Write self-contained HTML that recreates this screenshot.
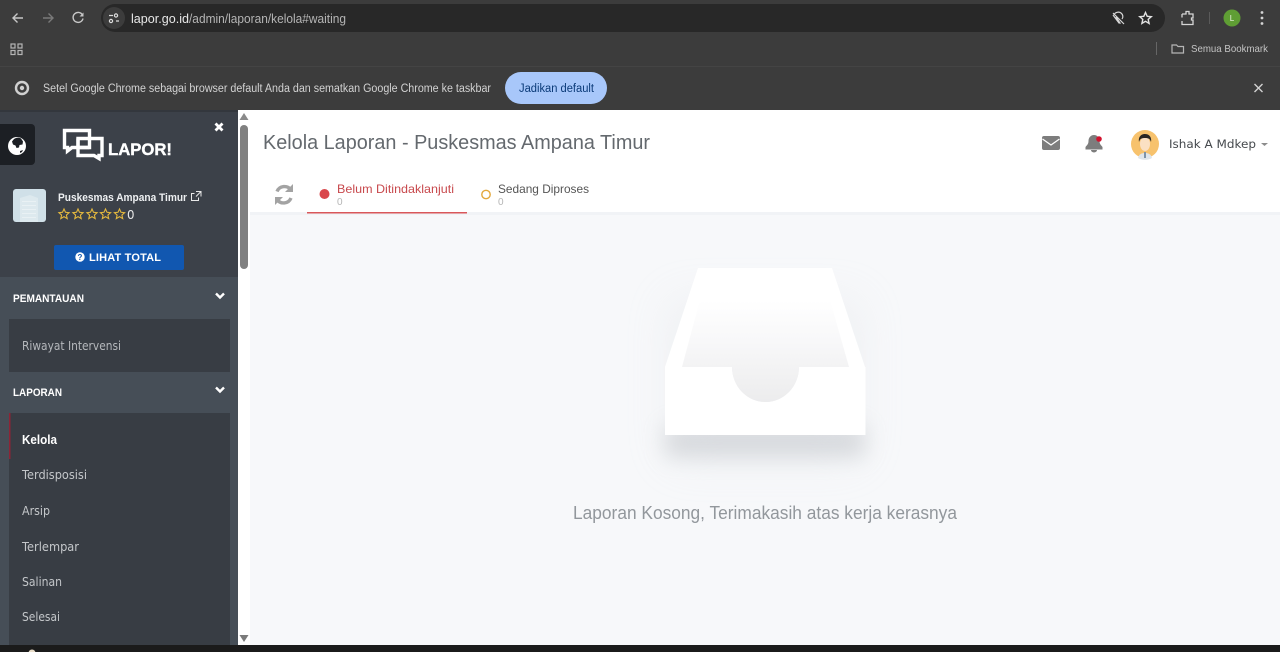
<!DOCTYPE html>
<html lang="id"><head><meta charset="utf-8"><title>Kelola Laporan</title>
<style>
html,body{margin:0;padding:0;width:1280px;height:652px;overflow:hidden;background:#f7f8fa}
svg{display:block;position:absolute;left:0;top:0;filter:blur(.3px)}
.c{font-family:"Liberation Sans",sans-serif}
.o{font-family:"DejaVu Sans",sans-serif}
</style></head><body>
<svg width="1280" height="652" viewBox="0 0 1280 652" xmlns="http://www.w3.org/2000/svg">
<defs>
<linearGradient id="inner2" gradientUnits="userSpaceOnUse" x1="0" y1="300" x2="0" y2="402"><stop offset="0" stop-color="#fff"/><stop offset=".4" stop-color="#f8f8f9"/><stop offset="1" stop-color="#ececed"/></linearGradient>
<filter id="blur" x="-30%" y="-100%" width="160%" height="300%"><feGaussianBlur stdDeviation="11"/></filter>
<filter id="blur2" x="-30%" y="-30%" width="160%" height="160%"><feGaussianBlur stdDeviation="22"/></filter>
</defs>

<!-- Chrome toolbar -->
<rect width="1280" height="110" fill="#3c3c3c"/>
<rect y="66" width="1280" height="1" fill="#444"/>
<rect x="101" y="4" width="1064" height="28" rx="14" fill="#282828"/>
<circle cx="114" cy="18" r="11" fill="#3c3c3c"/>
<g fill="none" stroke="#c7c7c7" stroke-width="1.400">
<path d="M23 18H13M17.500 13.500L13 18l4.500 4.500"/>
<path d="M43 18H53M48.500 13.500L53 18l-4.500 4.500" stroke="#7a7a7a"/>
<path d="M82.500 15a5 5 0 1 0 .5 3.500"/>
</g>
<path d="M83.500 12.500v4h-4z" fill="#c7c7c7"/>
<g fill="none" stroke="#ddd" stroke-width="1.200"><path d="M109 15.500h4M116 21h3"/><circle cx="116" cy="15.500" r="1.600"/><circle cx="111" cy="21" r="1.600"/></g>
<text class="c" x="131" y="23" font-size="13" fill="#e8e8e8" textLength="58" lengthAdjust="spacingAndGlyphs">lapor.go.id</text>
<text class="c" x="189" y="23" font-size="13" fill="#b5b5b5" textLength="157" lengthAdjust="spacingAndGlyphs">/admin/laporan/kelola#waiting</text>
<g fill="none" stroke="#d8d8d8" stroke-width="1.200"><path d="M1114 15c1-3 5-3.500 7-2 2 1.500 2.500 4 1 6M1116 17l4 6-1 0-6-8M1113 13l11 11"/></g>
<path d="M1145.500 12.500l1.700 3.800 4.100.4-3.100 2.700.9 4-3.600-2.100-3.600 2.100.9-4-3.100-2.700 4.100-.4z" fill="none" stroke="#e2e2e2" stroke-width="1.400"/>
<path d="M1182 14h4v-2.500h3V14h4v4h-1.500v2H1193v4.500h-4M1182 14v3.500M1182 21v3.500h7" fill="none" stroke="#d5d5d5" stroke-width="1.300"/>
<rect x="1209" y="12" width="1" height="12" fill="#5a5a5a"/>
<circle cx="1232" cy="18" r="8.500" fill="#5f9e34"/>
<text class="c" x="1232" y="21" font-size="8" fill="#e8f3df" text-anchor="middle">L</text>
<g fill="#d5d5d5"><circle cx="1262" cy="12.500" r="1.400"/><circle cx="1262" cy="18" r="1.400"/><circle cx="1262" cy="23.500" r="1.400"/></g>

<!-- Bookmarks bar -->
<g fill="none" stroke="#b5b5b5" stroke-width="1.200">
<rect x="11" y="44" width="4" height="4"/><rect x="18" y="44" width="4" height="4"/><rect x="11" y="50.500" width="4" height="4"/><rect x="18" y="50.500" width="4" height="4"/>
<path d="M1172 45h4.500l1.500 1.500h5.500v6.500h-11.500z"/>
</g>
<rect x="1156" y="42" width="1" height="13" fill="#666"/>
<text class="c" x="1191" y="52" font-size="10.500" fill="#c4c4c4" textLength="77" lengthAdjust="spacingAndGlyphs">Semua Bookmark</text>

<!-- Infobar -->
<circle cx="22" cy="88" r="6" fill="none" stroke="#d0d0d0" stroke-width="2.400"/>
<circle cx="22" cy="88" r="2.200" fill="#d0d0d0"/>
<text class="c" x="43" y="92" font-size="11.500" fill="#d2d2d2" textLength="448" lengthAdjust="spacingAndGlyphs">Setel Google Chrome sebagai browser default Anda dan sematkan Google Chrome ke taskbar</text>
<rect x="505" y="72" width="102" height="32" rx="16" fill="#a8c7fa"/>
<text class="c" x="519" y="92" font-size="11.500" fill="#0a3a78" textLength="75" lengthAdjust="spacingAndGlyphs">Jadikan default</text>
<path d="M1254.500 84l8 8M1262.500 84l-8 8" stroke="#d2d2d2" stroke-width="1.400"/>

<!-- Main -->
<rect x="0" y="110" width="1280" height="535" fill="#f7f8fa"/>
<rect x="238" y="110" width="1042" height="102" fill="#fff"/>
<rect x="250" y="212" width="1030" height="3" fill="#eceef1" opacity=".5"/>
<rect x="238" y="212" width="12" height="433" fill="#fff"/>

<!-- Sidebar -->
<rect x="0" y="110" width="238" height="167" fill="#3c4149"/>
<rect x="0" y="110" width="238" height="2" fill="#33373d"/>
<rect x="0" y="277" width="238" height="368" fill="#464e57"/>
<rect x="9" y="319" width="221" height="53" fill="#383d44"/>
<rect x="9" y="413" width="221" height="232" fill="#383d44"/>
<rect x="9" y="413" width="1.500" height="46" fill="#8e2436"/>

<!-- Scrollbar -->
<rect x="240" y="125" width="8" height="144" rx="4" fill="#808080"/>
<path d="M244 113l4.500 7h-9z" fill="#8a8a8a"/>
<path d="M239.500 635h9l-4.500 7z" fill="#7a7a7a"/>

<!-- Globe tab -->
<path d="M0 124h31a4 4 0 0 1 4 4v33a4 4 0 0 1-4 4H0z" fill="#1c1f24"/>
<circle cx="17" cy="146" r="9" fill="#fff"/>
<path d="M14 139c2-1.500 5-2 7-.5l2 3-.5 3-3 .5-.5 2.500-2.500.5-1-2.500-2.500-1-1-3z" fill="#1c1f24"/>
<path d="M20 151l3-1-1 2-2 1z" fill="#1c1f24"/>

<!-- Logo -->
<g fill="none" stroke="#fff" stroke-width="3.400">
<path d="M64.500 130.500h25v17H72l-4.500 3.500v-3.500h-3z"/>
<path d="M78 138.500h24v17h-3l0 3-5-3H78z"/>
<path d="M78 138.500v9h11.500"/>
</g>
<text class="c" x="108" y="155" font-size="17" font-weight="700" fill="#fff" stroke="#fff" stroke-width=".4" textLength="64" lengthAdjust="spacingAndGlyphs">LAPOR!</text>
<path d="M215.500 123.500l7 7M222.500 123.500l-7 7" stroke="#fff" stroke-width="2.800"/>

<!-- Profile -->
<rect x="13" y="189" width="33" height="33" rx="3" fill="#d0e0e8"/>
<path d="M20 198l10-3 8 3v24H20z" fill="#dde9ee"/>
<g fill="#e9f1f4"><rect x="22" y="201" width="14" height="1"/><rect x="22" y="205" width="14" height="1"/><rect x="22" y="209" width="14" height="1"/><rect x="22" y="213" width="14" height="1"/><rect x="22" y="217" width="14" height="1"/></g>
<text class="c" x="58" y="201" font-size="11" font-weight="700" fill="#eef0f2" textLength="129" lengthAdjust="spacingAndGlyphs">Puskesmas Ampana Timur</text>
<path d="M198.500 197.500v3h-7v-7h3M196 191.500h5v5M201 191.500l-5 5" fill="none" stroke="#e8e8e8" stroke-width="1"/>
<g fill="none" stroke="#e4b83e" stroke-width="1.100">
<path id="st" d="M64 209l1.500 3.300 3.600.4-2.700 2.400.8 3.500-3.200-1.900-3.200 1.900.8-3.500-2.700-2.400 3.600-.4z"/>
<use href="#st" x="14"/><use href="#st" x="28"/><use href="#st" x="41.500"/><use href="#st" x="55.500"/>
</g>
<text class="o" x="127" y="219" font-size="12" fill="#e8e8e8" textLength="7.500" lengthAdjust="spacingAndGlyphs">0</text>

<rect x="54" y="245" width="130" height="25" rx="2" fill="#1157b0"/>
<circle cx="80" cy="257" r="4.700" fill="#fff"/>
<text class="c" x="80" y="260" font-size="8" font-weight="700" fill="#1157b0" text-anchor="middle">?</text>
<text class="c" x="89" y="261" font-size="11" font-weight="700" fill="#fff" textLength="72">LIHAT TOTAL</text>

<text class="c" x="13" y="302" font-size="11" font-weight="700" fill="#fff" textLength="71" lengthAdjust="spacingAndGlyphs">PEMANTAUAN</text>
<path d="M216 293.500l4 4 4-4" fill="none" stroke="#fff" stroke-width="2.400"/>
<text class="o" x="22" y="350" font-size="12" fill="#b5b8bc" textLength="99" lengthAdjust="spacingAndGlyphs">Riwayat Intervensi</text>
<text class="c" x="13" y="396" font-size="11" font-weight="700" fill="#fff" textLength="49" lengthAdjust="spacingAndGlyphs">LAPORAN</text>
<path d="M216 387.500l4 4 4-4" fill="none" stroke="#fff" stroke-width="2.400"/>
<text class="c" x="22" y="444" font-size="13" font-weight="700" fill="#fff" textLength="35" lengthAdjust="spacingAndGlyphs">Kelola</text>
<g class="o" font-size="12" fill="#c4c7ca">
<text x="22" y="479" textLength="65" lengthAdjust="spacingAndGlyphs">Terdisposisi</text>
<text x="22" y="515" textLength="28" lengthAdjust="spacingAndGlyphs">Arsip</text>
<text x="22" y="551" textLength="57" lengthAdjust="spacingAndGlyphs">Terlempar</text>
<text x="22" y="586" textLength="40" lengthAdjust="spacingAndGlyphs">Salinan</text>
<text x="22" y="621" textLength="38" lengthAdjust="spacingAndGlyphs">Selesai</text>
</g>

<!-- Header -->
<text class="c" x="263" y="149" font-size="20" fill="#64696e" textLength="387" lengthAdjust="spacingAndGlyphs">Kelola Laporan - Puskesmas Ampana Timur</text>

<g fill="none" stroke="#a3a3a3" stroke-width="3.400">
<path d="M291 190a8 8 0 0 0-14 1.500"/>
<path d="M277 199.500a8 8 0 0 0 14-1.500"/>
</g>
<path d="M293 184v8h-8z" fill="#a3a3a3"/>
<path d="M275 205v-8h8z" fill="#a3a3a3"/>

<circle cx="324.500" cy="194" r="5" fill="#d9474b"/>
<text class="c" x="337" y="193" font-size="12" fill="#c8494d" textLength="117" lengthAdjust="spacingAndGlyphs">Belum Ditindaklanjuti</text>
<text class="c" x="337" y="205" font-size="10" fill="#b5b5b5">0</text>
<rect x="307" y="212" width="160" height="1.500" fill="#d9575a"/>
<circle cx="486" cy="194.500" r="4.200" fill="none" stroke="#e3a83c" stroke-width="1.400"/>
<text class="c" x="498" y="193" font-size="12" fill="#555" textLength="91" lengthAdjust="spacingAndGlyphs">Sedang Diproses</text>
<text class="c" x="498" y="205" font-size="10" fill="#b5b5b5">0</text>

<!-- Header right -->
<rect x="1042" y="136" width="18" height="14" rx="2" fill="#7d7d7d"/>
<path d="M1042.500 139l8.500 6 8.500-6" fill="none" stroke="#fff" stroke-width="1.300"/>
<path d="M1094 135c3.500 0 5.500 3 5.500 6 0 3.500 2 4.500 3 6v2.500h-17V147c1-1.500 3-2.500 3-6 0-3 2-6 5.500-6z" fill="#7d7d7d"/>
<path d="M1091 150a3 2.500 0 0 0 6 0z" fill="#7d7d7d"/>
<circle cx="1099" cy="139" r="2.800" fill="#d2122e"/>

<circle cx="1145" cy="144" r="14" fill="#f7c26d"/>
<path d="M1138 158c1-4 4-5 7-5s6 1 7 5a14 14 0 0 1-14 0z" fill="#dfe5ea"/>
<rect x="1144" y="152" width="2" height="6" fill="#7e93a8"/>
<ellipse cx="1145" cy="144" rx="5" ry="7" fill="#fbe0c3"/>
<path d="M1139 142c-1-5 2-8 6-8s7 3 6 8c-1-3-2-4-6-4s-5 1-6 4z" fill="#2a2622"/>
<text class="o" x="1169" y="148" font-size="11.500" fill="#45494d" textLength="87" lengthAdjust="spacingAndGlyphs">Ishak A Mdkep</text>
<path d="M1261 143h7l-3.500 3z" fill="#8c8c8c"/>

<!-- Drawer -->
<rect x="665" y="425" width="200" height="32" fill="#a9adb4" opacity=".38" filter="url(#blur)"/>
<rect x="670" y="300" width="190" height="160" fill="#ccd0d6" opacity=".2" filter="url(#blur2)"/>
<path d="M698 268H832L865 367H665z" fill="#fff"/>
<path d="M700 300H830L849 367H682z" fill="url(#inner2)"/>
<path d="M665 367H732A33.500 35 0 0 0 799 367H865.500V435H665z" fill="#fff"/>
<path d="M732 367A33.500 35 0 0 0 799 367z" fill="url(#inner2)"/>
<text class="c" x="573" y="519" font-size="18" fill="#92979c" textLength="384" lengthAdjust="spacingAndGlyphs">Laporan Kosong, Terimakasih atas kerja kerasnya</text>

<!-- Bottom bar -->
<rect x="0" y="645" width="1280" height="7" fill="#1b1b1b"/>
<circle cx="32" cy="653" r="3.500" fill="#e8dcc8"/>
</svg>
</body></html>
